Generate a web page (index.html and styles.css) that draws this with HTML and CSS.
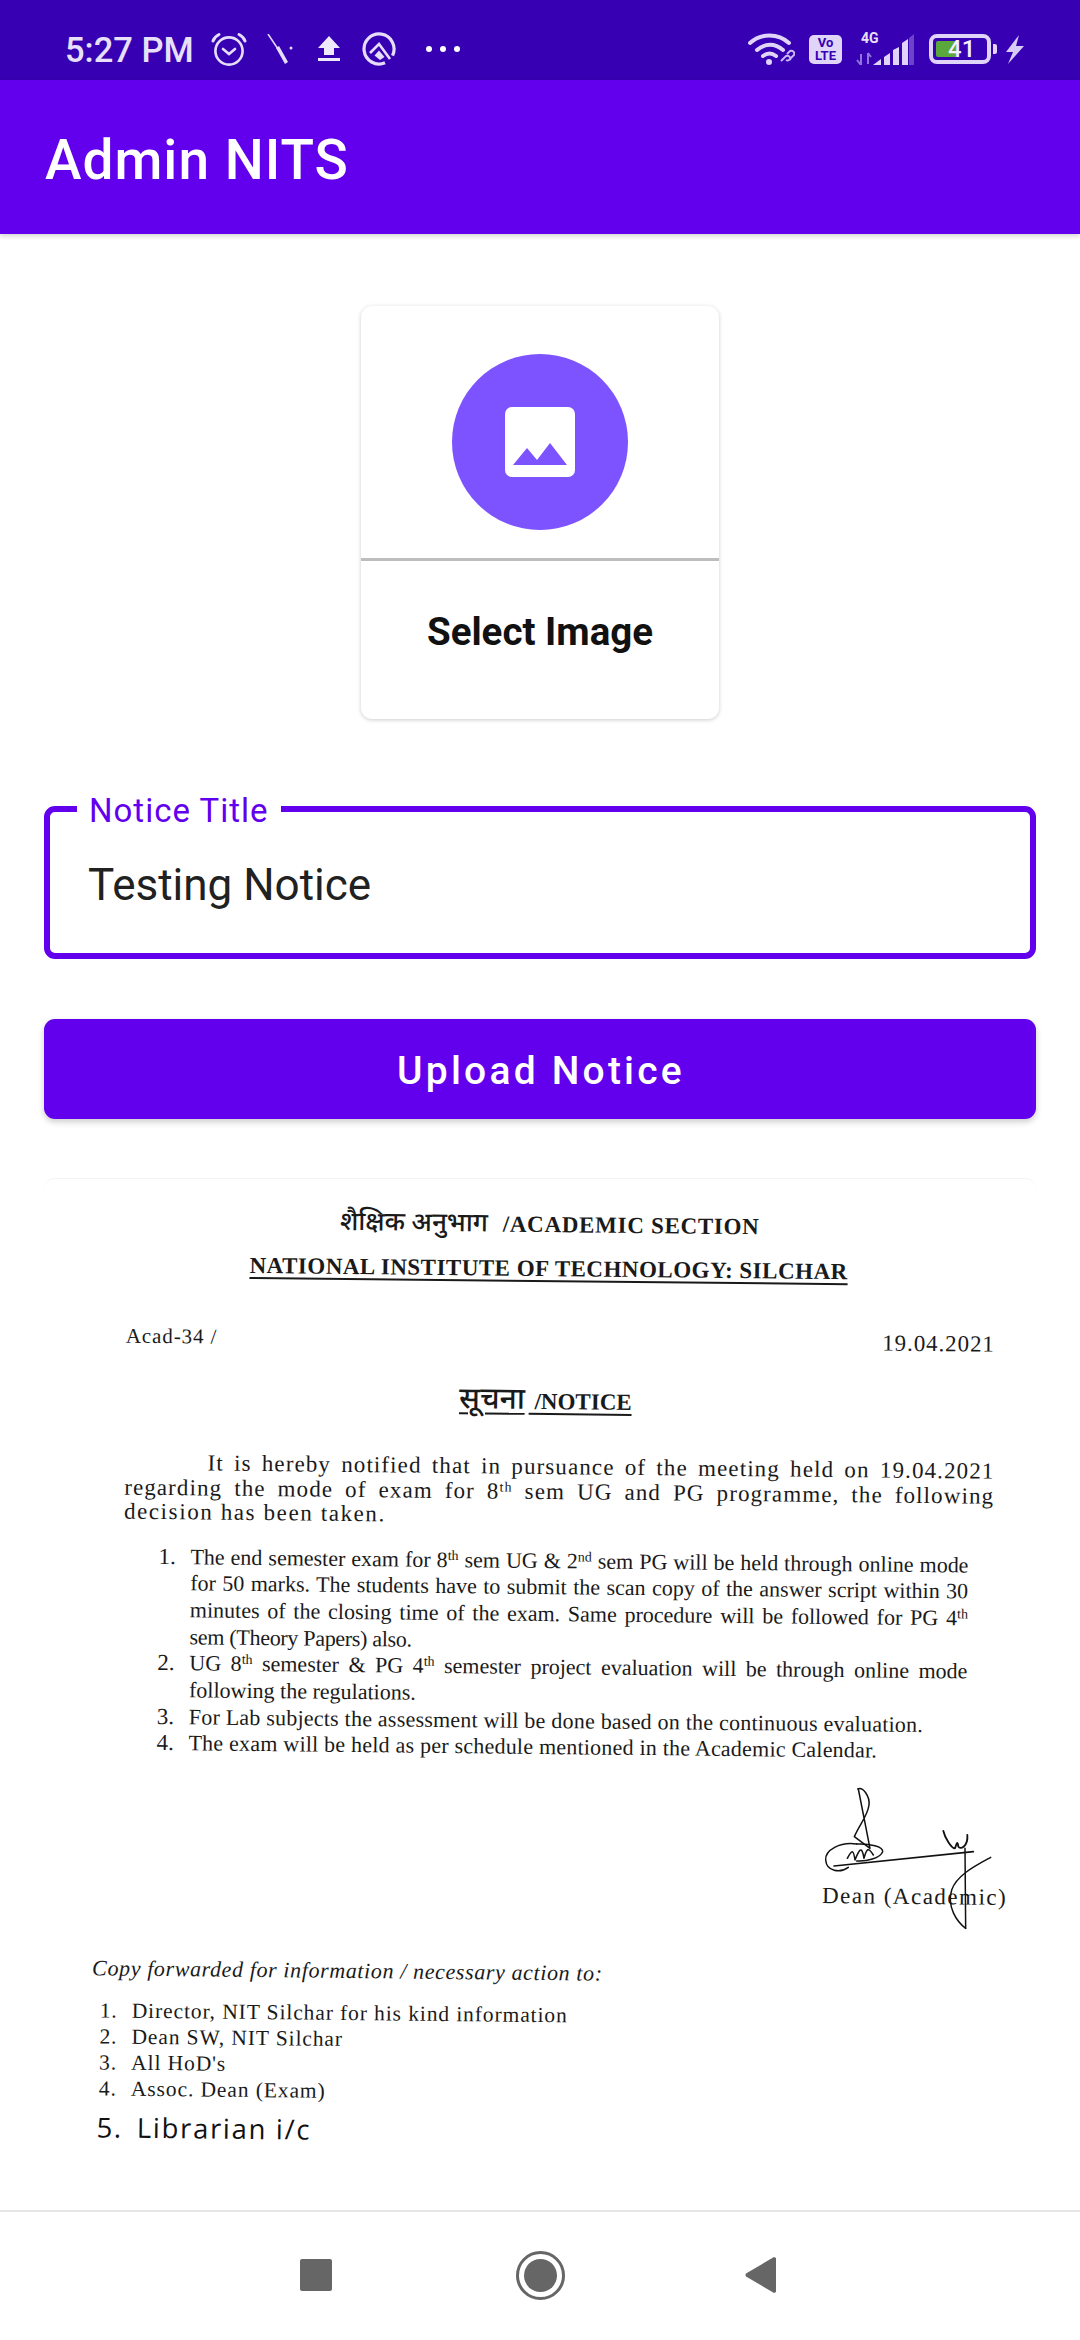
FILE: index.html
```html
<!DOCTYPE html>
<html lang="en">
<head>
<meta charset="utf-8">
<title>Admin NITS</title>
<link rel="stylesheet" href="styles.css">
</head>
<body>
<div class="screen">
  <header class="statusbar">
    <div class="status-left">
      <span class="time">5:27 PM</span>
      <svg class="si alarm" viewBox="0 0 36 34"><g fill="none" stroke="#e6ddfb" stroke-width="2.6" stroke-linecap="round"><circle cx="18" cy="19" r="13.6"/><path d="M12 17l6 5 6-5"/><path d="M2 9C3 6 5 4 8 2.500M34 9c-1-3-3-5-6-6.500" stroke-width="3"/></g></svg>
      <svg class="si tool" viewBox="0 0 29 30"><path d="M1 0l10 15" stroke="#e6ddfb" stroke-width="1.500" fill="none"/><path d="M9 14l3-2 9 16-3 2z" fill="#e6ddfb"/><circle cx="24" cy="14" r="1.500" fill="#e6ddfb"/></svg>
      <svg class="si up" viewBox="0 0 26 26"><path d="M13 0L24 12H18V19H8V12H2zM2 22H24V25H2z" fill="#efe9fd"/></svg>
      <svg class="si q" viewBox="0 0 34 34"><g fill="none" stroke="#e6ddfb"><path d="M23 30.750A15 15 0 1 1 30.500 23.600" stroke-width="3.200"/><path d="M8 21L17 12 28 27" stroke-width="2.600"/></g><path d="M17 18.500L22.500 25 18 28 12.500 23.500Z" fill="#e6ddfb"/></svg>
      <svg class="si dots" viewBox="0 0 46 8"><circle cx="13" cy="4" r="3" fill="#fff"/><circle cx="27" cy="4" r="3" fill="#fff"/><circle cx="41" cy="4" r="3" fill="#fff"/></svg>
    </div>
    <div class="status-right">
      <svg class="si wifi" viewBox="0 0 47 32"><g fill="none" stroke="#e0d5f9" stroke-width="4" stroke-linecap="round"><path d="M2 10C13 0 30 0 41 10"/><path d="M9 17C17 10 27 10 35 17"/><path d="M15 23C19 20 24 20 28 23"/></g><circle cx="21" cy="29" r="3" fill="#e0d5f9"/><g fill="none" stroke="#c9b8f3" stroke-width="2"><path d="M33 28l5-5a3 3 0 0 1 4 4M39 21l3-3a3 3 0 0 1 4 4l-5 5a3 3 0 0 1-3 0"/></g></svg>
      <div class="volte"><span>Vo</span><span>LTE</span></div>
      <div class="signal">
        <span class="g4">4G</span>
        <svg class="si bars" viewBox="0 0 59 31"><path d="M5 31V20M1 26l4 5M12 19v11M12 19l3 4" stroke="#8f76dc" stroke-width="2" fill="none"/><path d="M17 31l8-6v6zM28 23l6-4v12h-6zM37 16l6-3v18h-6zM46 9l6-4v26h-6z" fill="#e0d5f9"/><path d="M53 4l5-4v31h-5z" fill="#6a45c8"/></svg>
      </div>
      <div class="battery-group">
        <div class="battery"><span class="battery-fill"></span><span class="battery-num">41</span></div>
        <span class="nub"></span>
        <svg class="si bolt" viewBox="0 0 19 29"><path d="M14 0L1 17h7L3 29 19 11h-8z" fill="#d8ccf7"/></svg>
      </div>
    </div>
  </header>

  <div class="appbar"><h1 class="apptitle">Admin NITS</h1></div>

  <main class="content">
    <section class="picker">
      <div class="picker-top">
        <div class="picker-circle">
          <svg class="picker-icon" viewBox="0 0 70 70"><path d="M7 0H63A7 7 0 0 1 70 7V63A7 7 0 0 1 63 70H7A7 7 0 0 1 0 63V7A7 7 0 0 1 7 0Z" fill="#fff"/><path d="M8 58L22 41 32 53 45 36 62 58Z" fill="#7c53ff"/></svg>
        </div>
      </div>
      <div class="picker-label">Select Image</div>
    </section>

    <div class="field">
      <span class="field-label">Notice Title</span>
      <span class="field-value">Testing Notice</span>
    </div>

    <button class="upload">Upload Notice</button>

    <section class="doc">
      <div class="scan">
        <p class="h1"><span class="deva">शैक्षिक अनुभाग</span><span class="h1-en">/ACADEMIC SECTION</span></p>
        <p class="h2"><u>NATIONAL INSTITUTE OF TECHNOLOGY: SILCHAR</u></p>
        <p class="ref"><span>Acad-34 /</span><span class="date">19.04.2021</span></p>
        <p class="h3"><u><span class="deva deva-lg">सूचना</span> /NOTICE</u></p>
        <div class="para">
          <p class="j first">It is hereby notified that in pursuance of the meeting held on 19.04.2021</p>
          <p class="j">regarding the mode of exam for 8<sup>th</sup> sem UG and PG programme, the following</p>
          <p class="para-end">decision has been taken.</p>
        </div>
        <ol class="points">
          <li><span class="n">1.</span><div class="t"><p class="j">The end semester exam for 8<sup>th</sup> sem UG &amp; 2<sup>nd</sup> sem PG will be held through online mode</p><p class="j">for 50 marks. The students have to submit the scan copy of the answer script within 30</p><p class="j">minutes of the closing time of the exam. Same procedure will be followed for PG 4<sup>th</sup></p><p class="tight">sem (Theory Papers) also.</p></div></li>
          <li><span class="n">2.</span><div class="t"><p class="j">UG 8<sup>th</sup> semester &amp; PG 4<sup>th</sup> semester project evaluation will be through online mode</p><p>following the regulations.</p></div></li>
          <li><span class="n">3.</span><div class="t"><p class="loose">For Lab subjects the assessment will be done based on the continuous evaluation.</p></div></li>
          <li><span class="n">4.</span><div class="t"><p class="loose">The exam will be held as per schedule mentioned in the Academic Calendar.</p></div></li>
        </ol>
        <p class="dean">Dean (Academic)</p>
        <p class="copy">Copy forwarded for information / necessary action to:</p>
        <ol class="cc">
          <li><span class="n">1.</span><span>Director, NIT Silchar for his kind information</span></li>
          <li><span class="n">2.</span><span>Dean SW, NIT Silchar</span></li>
          <li><span class="n">3.</span><span>All HoD's</span></li>
          <li><span class="n">4.</span><span>Assoc. Dean (Exam)</span></li>
        </ol>
        <p class="hand"><span class="hn">5.</span>Librarian i/c</p>
      </div>
      <svg class="sign" viewBox="0 0 840 600"><g fill="none" stroke="#111" stroke-width="4.500" stroke-linecap="round" stroke-linejoin="round"><path d="M293 27C310 20 330 50 327 75 322 110 300 130 283 170L330 205 295 27"/><path d="M290 192C240 185 195 210 197 240 200 275 240 280 265 262"/><path d="M290 192C330 190 370 200 368 215 360 235 320 245 290 243"/><path d="M262 235C275 210 280 205 285 240 295 215 305 190 312 235 320 205 325 200 340 225"/><path d="M222 258L640 215" stroke-width="5"/><path d="M550 153C555 175 575 205 585 205 590 190 592 180 595 200 600 210 625 200 622 165" stroke-width="5.500"/><path d="M615 205L617 445"/><path d="M692 232C650 255 590 285 575 330 560 380 590 425 617 445"/></g></svg>
    </section>
  </main>

  <nav class="navbar">
    <span class="nav-square"></span>
    <span class="nav-home"><span class="nav-home-dot"></span></span>
    <svg class="nav-back" viewBox="0 0 31 36"><path d="M31 1V35L29 36 1 19.500Q0 18 1 16.500L29 0Z" fill="#666"/></svg>
  </nav>
</div>
</body>
</html>
```
FILE: styles.css
```css
* { box-sizing: border-box; }
html, body { margin: 0; padding: 0; background: #fff; }
p, h1, ol { margin: 0; padding: 0; }
ol { list-style: none; }
.screen { width: 1080px; height: 2340px; display: flex; flex-direction: column; overflow: hidden; font-family: Roboto, sans-serif; background: #fff; }

.statusbar { height: 80px; background: #3700b3; flex: none; display: flex; justify-content: space-between; align-items: center; padding: 18px 56px 0 65px; }
.status-left, .status-right { display: flex; align-items: center; gap: 20px; }
.status-right { gap: 14px; }
.si { display: block; flex: none; }
.time { width: 129px; flex: none; font-size: 34.500px; line-height: 40px; margin-top: 2px; font-weight: 500; color: #e8e0fb; margin-right: -3px; white-space: nowrap; }
.alarm { width: 36px; height: 34px; }
.tool { width: 29px; height: 30px; }
.up { width: 26px; height: 26px; }
.q { width: 34px; height: 34px; }
.dots { width: 46px; height: 8px; }
.wifi { width: 47px; height: 32px; }
.volte { width: 33px; height: 29px; border-radius: 5px; background: #e0d5f9; color: #3700b3; display: flex; flex-direction: column; align-items: center; font-size: 13px; font-weight: 700; line-height: 13px; padding-top: 1px; }
.signal { width: 59px; height: 31px; position: relative; }
.bars { width: 59px; height: 31px; }
.g4 { position: absolute; left: 5px; top: -3px; font-size: 14px; line-height: 14px; font-weight: 700; color: #e8e0fb; }
.battery-group { display: flex; align-items: center; }
.battery { width: 62px; height: 30px; border: 4px solid #e0d5f9; border-radius: 8px; position: relative; padding: 3px; }
.battery-fill { display: block; width: 20px; height: 16px; background: #5aa83b; border-radius: 2px 0 0 2px; }
.battery-num { position: absolute; left: 15px; top: -3px; font-size: 24px; line-height: 28px; color: #f4f0ff; font-weight: 500; }
.nub { width: 4px; height: 10px; margin-left: 2px; background: #e0d5f9; border-radius: 0 2px 2px 0; }
.bolt { width: 19px; height: 29px; margin-left: 8px; }

.appbar { height: 154px; background: #6200ee; flex: none; display: flex; align-items: center; padding: 5px 45px 0; box-shadow: 0 2px 5px rgba(0,0,0,.18); position: relative; }
.apptitle { font-size: 55px; font-weight: 500; color: #fff; line-height: 64px; letter-spacing: 1px; }

.content { flex: 1; display: flex; flex-direction: column; padding: 0 44px; min-height: 0; }
.picker { width: 358px; height: 413px; margin: 72px auto 0; border-radius: 11px; background: #fff; box-shadow: 0 1px 4px rgba(0,0,0,.2); display: flex; flex-direction: column; flex: none; }
.picker-top { height: 255px; border-bottom: 3px solid #bdbdbd; display: flex; justify-content: center; padding-top: 48px; flex: none; }
.picker-circle { width: 176px; height: 176px; border-radius: 50%; background: #7c53ff; display: flex; align-items: center; justify-content: center; }
.picker-icon { width: 70px; height: 70px; display: block; }
.picker-label { text-align: center; font-size: 38.500px; font-weight: 700; color: #111; line-height: 48px; padding-top: 47px; }

.field { height: 153px; margin-top: 87px; border: 6px solid #6200ee; border-radius: 11px; position: relative; display: flex; align-items: center; padding: 4px 0 0 39px; flex: none; }
.field-label { position: absolute; left: 27px; top: -20px; padding: 0 12px; background: #fff; color: #6200ee; font-size: 33px; line-height: 38px; letter-spacing: 1px; }
.field-value { font-size: 44px; line-height: 52px; color: #212121; margin-left: -1px; }

.upload { height: 100px; margin-top: 60px; border: 0; border-radius: 11px; background: #6200ee; color: #fff; font-family: Roboto, sans-serif; font-size: 39px; font-weight: 500; letter-spacing: 3.200px; padding: 3px 0 0 2px; box-shadow: 0 3px 6px rgba(0,0,0,.2); flex: none; }

.doc { flex: 1; margin-top: 59px; border-top: 1px solid #f3f3f3; border-radius: 11px 11px 0 0; position: relative; min-height: 0; }
.scan { transform: rotate(.6deg); transform-origin: 496px 522px; font-family: "Liberation Serif", "Noto Sans Devanagari", "Noto Sans", serif; color: #1a1a1a; font-size: 23px; line-height: 26px; padding-top: 33px; white-space: nowrap; }
.deva { font-size: 26px; font-weight: 500; line-height: 0; }
.deva-lg { font-size: 30px; margin-right: 4px; }
.h1 { margin-left: 291px; height: 26px; font-weight: 700; }
.h1-en { margin-left: 15px; letter-spacing: .7px; }
.h2 { margin: 18px 0 0 201px; width: 596px; font-weight: 700; letter-spacing: .5px; text-align: center; }
.h2 u, .h3 u { text-underline-offset: 4px; text-decoration-thickness: 2px; }
.ref { margin: 45px 0 0 78px; width: 869px; display: flex; justify-content: space-between; font-size: 21px; letter-spacing: .9px; height: 26px; }
.date { font-size: 23px; }
.h3 { margin: 36px 0 0 412px; width: 180px; height: 26px; font-weight: 700; }
.para { margin: 40px 0 0 78px; width: 870px; line-height: 24.500px; font-size: 23px; letter-spacing: 1.100px; }
.para-end { letter-spacing: 1.600px; }
.j { text-align: justify; text-align-last: justify; white-space: normal; }
.para .first { margin-left: 83px; }
sup { font-size: 14px; line-height: 0; vertical-align: 7px; }
.points { margin: 19px 0 0 113px; width: 810px; line-height: 26.700px; }
.points li { display: flex; }
.n { flex: none; width: 32px; }
.t { flex: 1; min-width: 0; font-size: 22px; }
.tight { letter-spacing: -.3px; }
.loose { letter-spacing: .22px; }
.dean { margin: 119px 0 0 780px; font-size: 23px; letter-spacing: 1.500px; }
.copy { margin: 54px 0 0 51px; font-style: italic; font-size: 22px; letter-spacing: .62px; }
.cc { margin: 16px 0 0 59px; font-size: 21.500px; letter-spacing: .9px; }
.cc li { display: flex; }
.hand { margin: 13px 0 0 57px; font-family: "Open Sans", sans-serif; font-weight: 400; font-size: 27.500px; letter-spacing: 1.700px; color: #111; }
.hn { margin-right: 14px; }
.sign { position: absolute; left: 716px; top: 601px; width: 280px; height: 200px; }

.navbar { height: 130px; border-top: 2px solid #e6e6e6; flex: none; background: #fff; display: flex; align-items: center; gap: 184px; padding: 0 0 2px 300px; }
.nav-square { width: 32px; height: 32px; background: #666; border-radius: 2px; }
.nav-home { width: 49px; height: 49px; border: 3.500px solid #666; border-radius: 50%; display: flex; align-items: center; justify-content: center; }
.nav-home-dot { width: 33px; height: 33px; border-radius: 50%; background: #666; }
.nav-back { width: 31px; height: 36px; display: block; margin-left: -4px; }
```
